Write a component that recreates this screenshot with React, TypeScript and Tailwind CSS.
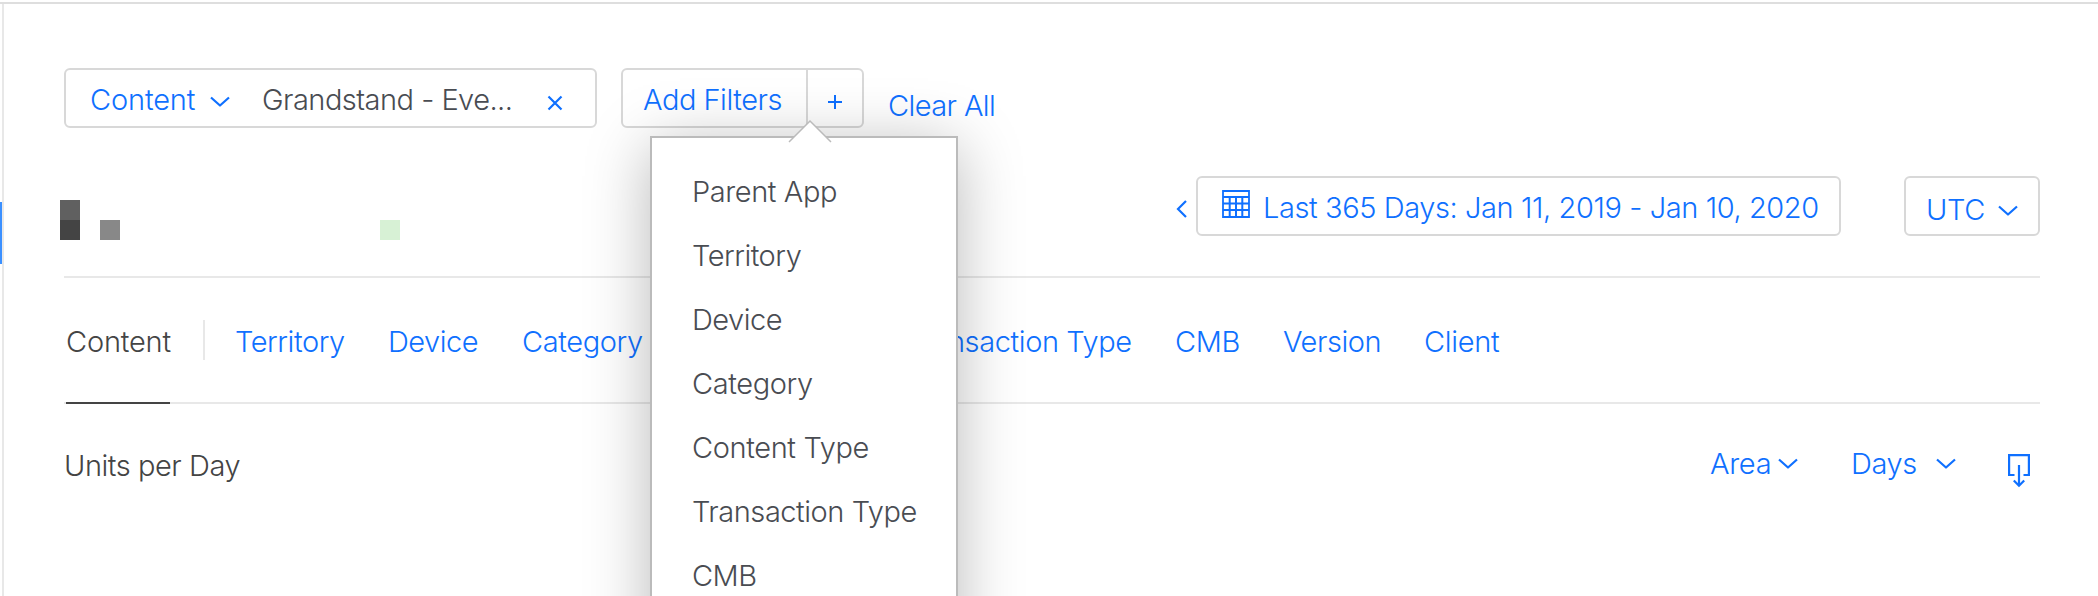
import type { ReactNode } from 'react'
import clsx from 'clsx'

const filterOptions = [
  { label: 'Parent App', className: 'tracking-[-0.42px]' },
  { label: 'Territory', className: 'tracking-[-0.5px]' },
  { label: 'Device', className: 'tracking-[-0.5px]' },
  { label: 'Category', className: 'tracking-[-0.4px]' },
  { label: 'Content Type', className: 'tracking-[-0.38px]' },
  { label: 'Transaction Type', className: 'tracking-[-0.46px]' },
  { label: 'CMB', className: 'tracking-[-0.5px]' },
]

const tabs = [
  { label: 'Territory', className: 'w-[153px] tracking-[-0.45px]' },
  { label: 'Device', className: 'w-[134px] tracking-[-0.5px]' },
  { label: 'Category', className: 'w-[164px] tracking-[-0.4px]' },
  { label: 'Content Type', className: 'w-[220px] tracking-[-0.36px]' },
  { label: 'Transaction Type', className: 'w-[269px] tracking-[-0.4px]' },
  { label: 'CMB', className: 'w-[108px] tracking-[-0.3px]' },
  { label: 'Version', className: 'w-[141px] tracking-[-0.45px]' },
  { label: 'Client', className: 'w-[80px] tracking-[-0.3px]' },
]

function Chevron({ className }: { className?: string }) {
  return (
    <svg className={clsx('shrink-0', className)} width="20" height="12" viewBox="0 0 20 12" fill="none" stroke="currentColor" strokeWidth="2.2">
      <path d="M1 1.5 L10 9.5 L19 1.5" strokeLinejoin="round" />
    </svg>
  )
}

function CalendarIcon() {
  return (
    <svg className="mt-3 shrink-0" width="28" height="28" viewBox="0 0 28 28" fill="none" stroke="currentColor" strokeWidth="2">
      <path d="M1 1H27V27H1Z" strokeWidth="1.8" />
      <path d="M1 7H27M1 13.5H27M1 20H27M7.7 7V27M14 7V27M20.3 7V27" />
    </svg>
  )
}

function DownloadIcon() {
  return (
    <svg className="mt-[10px] shrink-0" width="22" height="34" viewBox="0 0 22 34" fill="none" stroke="currentColor" strokeWidth="2.2">
      <path d="M6.5 21H1.1V1.1H20.9V21H15.5" />
      <path d="M11 11V31.5M5.8 26.5L11 31.7L16.2 26.5" />
    </svg>
  )
}

function Text({ children, className }: { children: ReactNode; className?: string }) {
  return <span className={clsx('block shrink-0 whitespace-nowrap', className)}>{children}</span>
}

function FilterMenu() {
  return (
    <div className="absolute left-[27px] top-[66px] z-10 h-[520px] w-[308px] border-2 border-[#bbbbbb] bg-white pl-10 pt-[36px] text-[#494c52] shadow-[0_10px_60px_rgba(0,0,0,0.28)]">
      <svg className="absolute left-[136px] top-[-19px]" width="44" height="24" viewBox="0 0 44 24">
        <path d="M1 23L22 2L43 23Z" fill="white" />
        <path d="M1 23L22 2L43 23" fill="none" stroke="#bbbbbb" strokeWidth="1.5" />
      </svg>
      {filterOptions.map(option => (
        <Text key={option.label} className={clsx('mb-7', option.className)}>{option.label}</Text>
      ))}
    </div>
  )
}

export default function App() {
  return (
    <div className="h-[596px] w-full overflow-hidden bg-white pt-[2px] font-[Inter,sans-serif] text-[29px] font-light leading-[36px] text-[#0f70ff]">
      <div className="h-[2px] bg-[#dedede]" />
      <div className="flex">
        <aside className="h-[592px] w-1 shrink-0 border-r-2 border-[#e8e8e8] pt-[198px]">
          <div className="h-[62px] w-[2px] bg-[#3b90ff]" />
        </aside>

        <main className="ml-[60px] w-[1976px] pt-16">
          <div className="flex h-[60px]">
            <div className="flex w-[533px] rounded-md border-2 border-[#d8d8d8] pl-6 pt-3">
              <Text className="w-[120px] tracking-[-0.15px]">Content</Text>
              <Chevron className="mt-[14px]" />
              <Text className="ml-8 w-[285px] tracking-[-0.52px] text-[#494c52]">Grandstand - Eve...</Text>
              <svg className="mt-[13px]" width="16" height="16" viewBox="0 0 16 16" fill="none" stroke="currentColor" strokeWidth="2.2">
                <path d="M1.5 1.5L14.5 14.5M14.5 1.5L1.5 14.5" />
              </svg>
            </div>

            <div className="relative ml-6 flex w-[243px] rounded-md border-2 border-[#d8d8d8]">
              <div className="w-[185px] border-r-2 border-[#d8d8d8] pl-5 pt-3">
                <Text className="tracking-[-0.48px]">Add Filters</Text>
              </div>
              <svg className="ml-[19px] mt-6" width="16" height="16" viewBox="0 0 16 16" fill="none" stroke="currentColor" strokeWidth="2">
                <path d="M8 1V15M1 8H15" />
              </svg>
              <FilterMenu />
            </div>

            <Text className="ml-6 mt-5 tracking-[-0.6px]">Clear All</Text>
          </div>

          <div className="mt-12 flex h-[102px] border-b-2 border-[#e8e8e8]">
            {/* redacted app name */}
            <div className="-ml-1 mt-6 grid h-10 w-[340px] shrink-0 grid-cols-[20px_20px_20px_260px_20px] grid-rows-2">
              <div className="bg-[#606060]" />
              <div className="col-start-1 row-start-2 bg-[#444444]" />
              <div className="col-start-3 row-start-2 bg-[#888888]" />
              <div className="col-start-5 row-start-2 bg-[#d7f1d5]" />
            </div>
            <svg className="ml-[776px] mt-6" width="12" height="18" viewBox="0 0 12 18" fill="none" stroke="currentColor" strokeWidth="2.2">
              <path d="M10 1L2 9L10 17" />
            </svg>
            <div className="ml-2 flex h-[60px] w-[645px] rounded-md border-2 border-[#d8d8d8] pl-6">
              <CalendarIcon />
              <Text className="ml-[13px] mt-3 tracking-[-0.41px]">Last 365 Days: Jan 11, 2019 - Jan 10, 2020</Text>
            </div>
            <div className="ml-[63px] flex h-[60px] w-[136px] rounded-md border-2 border-[#d8d8d8] pl-5 pt-[14px]">
              <Text className="w-[72px] tracking-[-0.3px]">UTC</Text>
              <Chevron className="mt-[13px]" />
            </div>
          </div>

          <nav className="flex h-[126px] border-b-2 border-[#e8e8e8] pt-[42px]">
            <div className="-mb-[2px] -mt-[42px] ml-[2px] w-[104px] border-b-2 border-[#444444] pt-[46px] text-[#444444]">
              <Text className="tracking-[-0.2px]">Content</Text>
            </div>
            <div className="ml-[33px] mr-[30px] h-10 w-[2px] bg-[#e8e8e8]" />
            {tabs.map(tab => (
              <Text key={tab.label} className={clsx('pt-1', tab.className)}>{tab.label}</Text>
            ))}
          </nav>

          <div className="flex pt-10">
            <Text className="mt-1 w-[1646px] tracking-[-0.45px] text-[#444444]">Units per Day</Text>
            <Text className="mt-[2px] w-[68px] tracking-[-0.3px]">Area</Text>
            <Chevron className="mt-[14px]" />
            <Text className="ml-[53px] mt-[2px] w-[85px] tracking-[-0.4px]">Days</Text>
            <Chevron className="mr-[52px] mt-[14px]" />
            <DownloadIcon />
          </div>
        </main>
      </div>
    </div>
  )
}
